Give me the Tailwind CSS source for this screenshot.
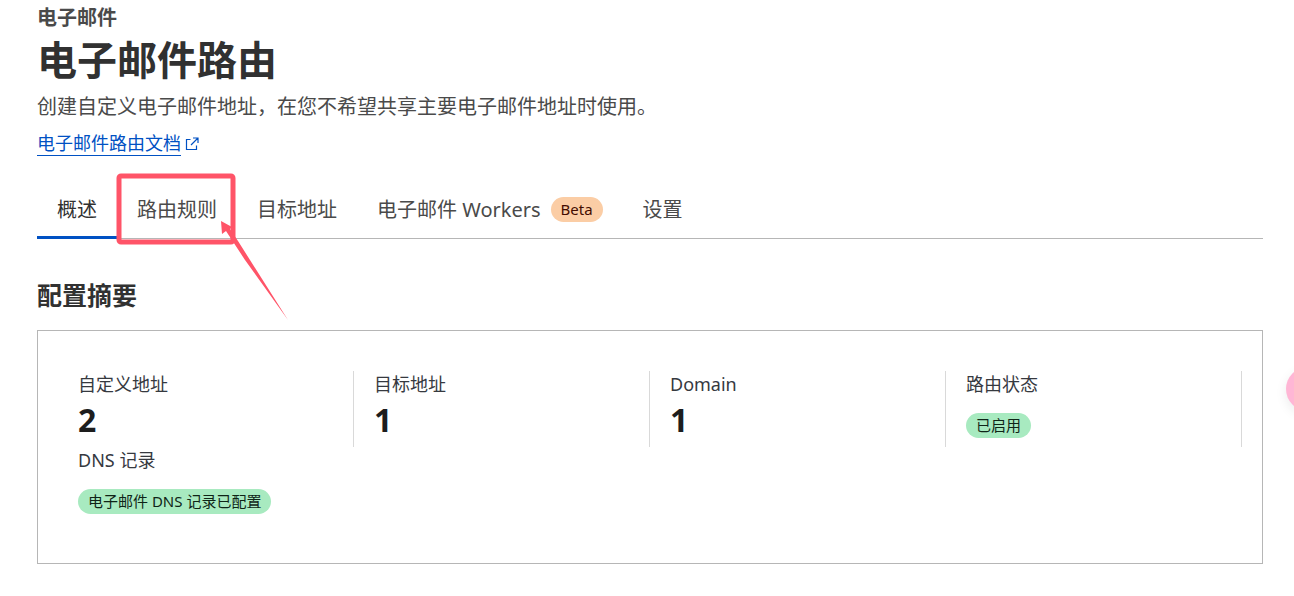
<!DOCTYPE html>
<html lang="zh-CN">
<head>
<meta charset="utf-8">
<meta name="viewport" content="width=device-width, initial-scale=1">
<title>电子邮件路由</title>
<script src="https://cdn.jsdelivr.net/npm/@tailwindcss/browser@4"></script>
</head>
<body class="relative min-h-screen overflow-x-hidden bg-white pt-[6px] pr-[31px] pb-8 pl-[37px] font-['Noto_Sans','Noto_Sans_CJK_SC',sans-serif] text-[#4a4a4a]">
  <header>
    <p class="text-xl leading-6 font-bold">电子邮件</p>
    <h1 class="text-[40px] leading-[60px] font-bold text-[#313131]">电子邮件路由</h1>
    <p class="text-xl leading-[34px]">创建自定义电子邮件地址，在您不希望共享主要电子邮件地址时使用。</p>
    <a href="#docs" class="mt-[7px] flex w-fit items-center gap-1 text-[#0051c3]">
      <span class="border-b border-[#0051c3] text-lg leading-6">电子邮件路由文档</span>
      <svg class="size-[14px]" viewBox="0 0 14 14" fill="none" stroke="currentColor" stroke-width="1.2" aria-hidden="true"><path d="M5.500 2.500H1.500v10h10V8.500M8 1h5v5M13 1L6 8"/></svg>
    </a>
  </header>

  <nav class="relative mt-[23px] flex h-[60px] border-b border-[#b6b6b6] text-xl" aria-label="电子邮件路由">
    <a href="#overview" aria-current="page" class="-mb-px flex items-center border-b-3 border-[#0051c3] px-5 pt-1 text-[#313131]">概述</a>
    <a href="#rules" class="flex items-center px-5 pt-0.5">路由规则</a>
    <a href="#destinations" class="flex items-center px-5 pt-0.5">目标地址</a>
    <a href="#workers" class="flex items-center gap-[10px] px-5 pt-0.5">电子邮件 Workers <span class="rounded-full bg-[#fbcda5] px-[10px] text-[15px] leading-[25px] text-[#430c00]">Beta</span></a>
    <a href="#settings" class="flex items-center px-5 pt-0.5">设置</a>
    <svg class="pointer-events-none absolute -top-[9px] left-[73px] h-[160px] w-[190px]" viewBox="110 170 190 160" aria-hidden="true">
      <rect x="119" y="176" width="114" height="66" rx="2" fill="none" stroke="#ff5468" stroke-width="5"/>
      <path d="M221 221L232 227L230 229L238 241L250 260L288 320L245 260L226 231L222 234Z" fill="#ff5468"/>
    </svg>
  </nav>

  <main>
    <h2 class="mt-[37px] text-[25px] leading-[38px] font-bold text-[#313131]">配置摘要</h2>
    <dl class="mt-4 grid grid-cols-4 border border-[#b6b6b6] px-5 py-10 text-[#36393f]">
      <div class="h-[76px] border-r border-[#d9d9d9] px-5">
        <dt class="text-lg leading-[26px]">自定义地址</dt>
        <dd class="text-[32px] leading-[46px] font-bold text-[#1d1d1d]">2</dd>
      </div>
      <div class="h-[76px] border-r border-[#d9d9d9] px-5">
        <dt class="text-lg leading-[26px]">目标地址</dt>
        <dd class="text-[32px] leading-[46px] font-bold text-[#1d1d1d]">1</dd>
      </div>
      <div class="h-[76px] border-r border-[#d9d9d9] px-5">
        <dt class="text-lg leading-[26px]">Domain</dt>
        <dd class="text-[32px] leading-[46px] font-bold text-[#1d1d1d]">1</dd>
      </div>
      <div class="h-[76px] border-r border-[#d9d9d9] px-5">
        <dt class="text-lg leading-[26px]">路由状态</dt>
        <dd class="mt-4 flex"><span class="rounded-full bg-[#a8eac0] px-[10px] text-[15px] leading-[25px] text-[#0f2417]">已启用</span></dd>
      </div>
      <div class="h-[76px] px-5">
        <dt class="text-lg leading-[26px]">DNS 记录</dt>
        <dd class="mt-4 flex"><span class="rounded-full bg-[#a8eac0] px-[10px] text-[15px] leading-[25px] text-[#0f2417]">电子邮件 DNS 记录已配置</span></dd>
      </div>
    </dl>
  </main>

  <button type="button" aria-label="打开助手" class="absolute top-[367px] -right-9 size-11 rounded-full bg-[#ffb6d5] shadow-[0_4px_12px_rgba(0,0,0,0.08)]"></button>
</body>
</html>
